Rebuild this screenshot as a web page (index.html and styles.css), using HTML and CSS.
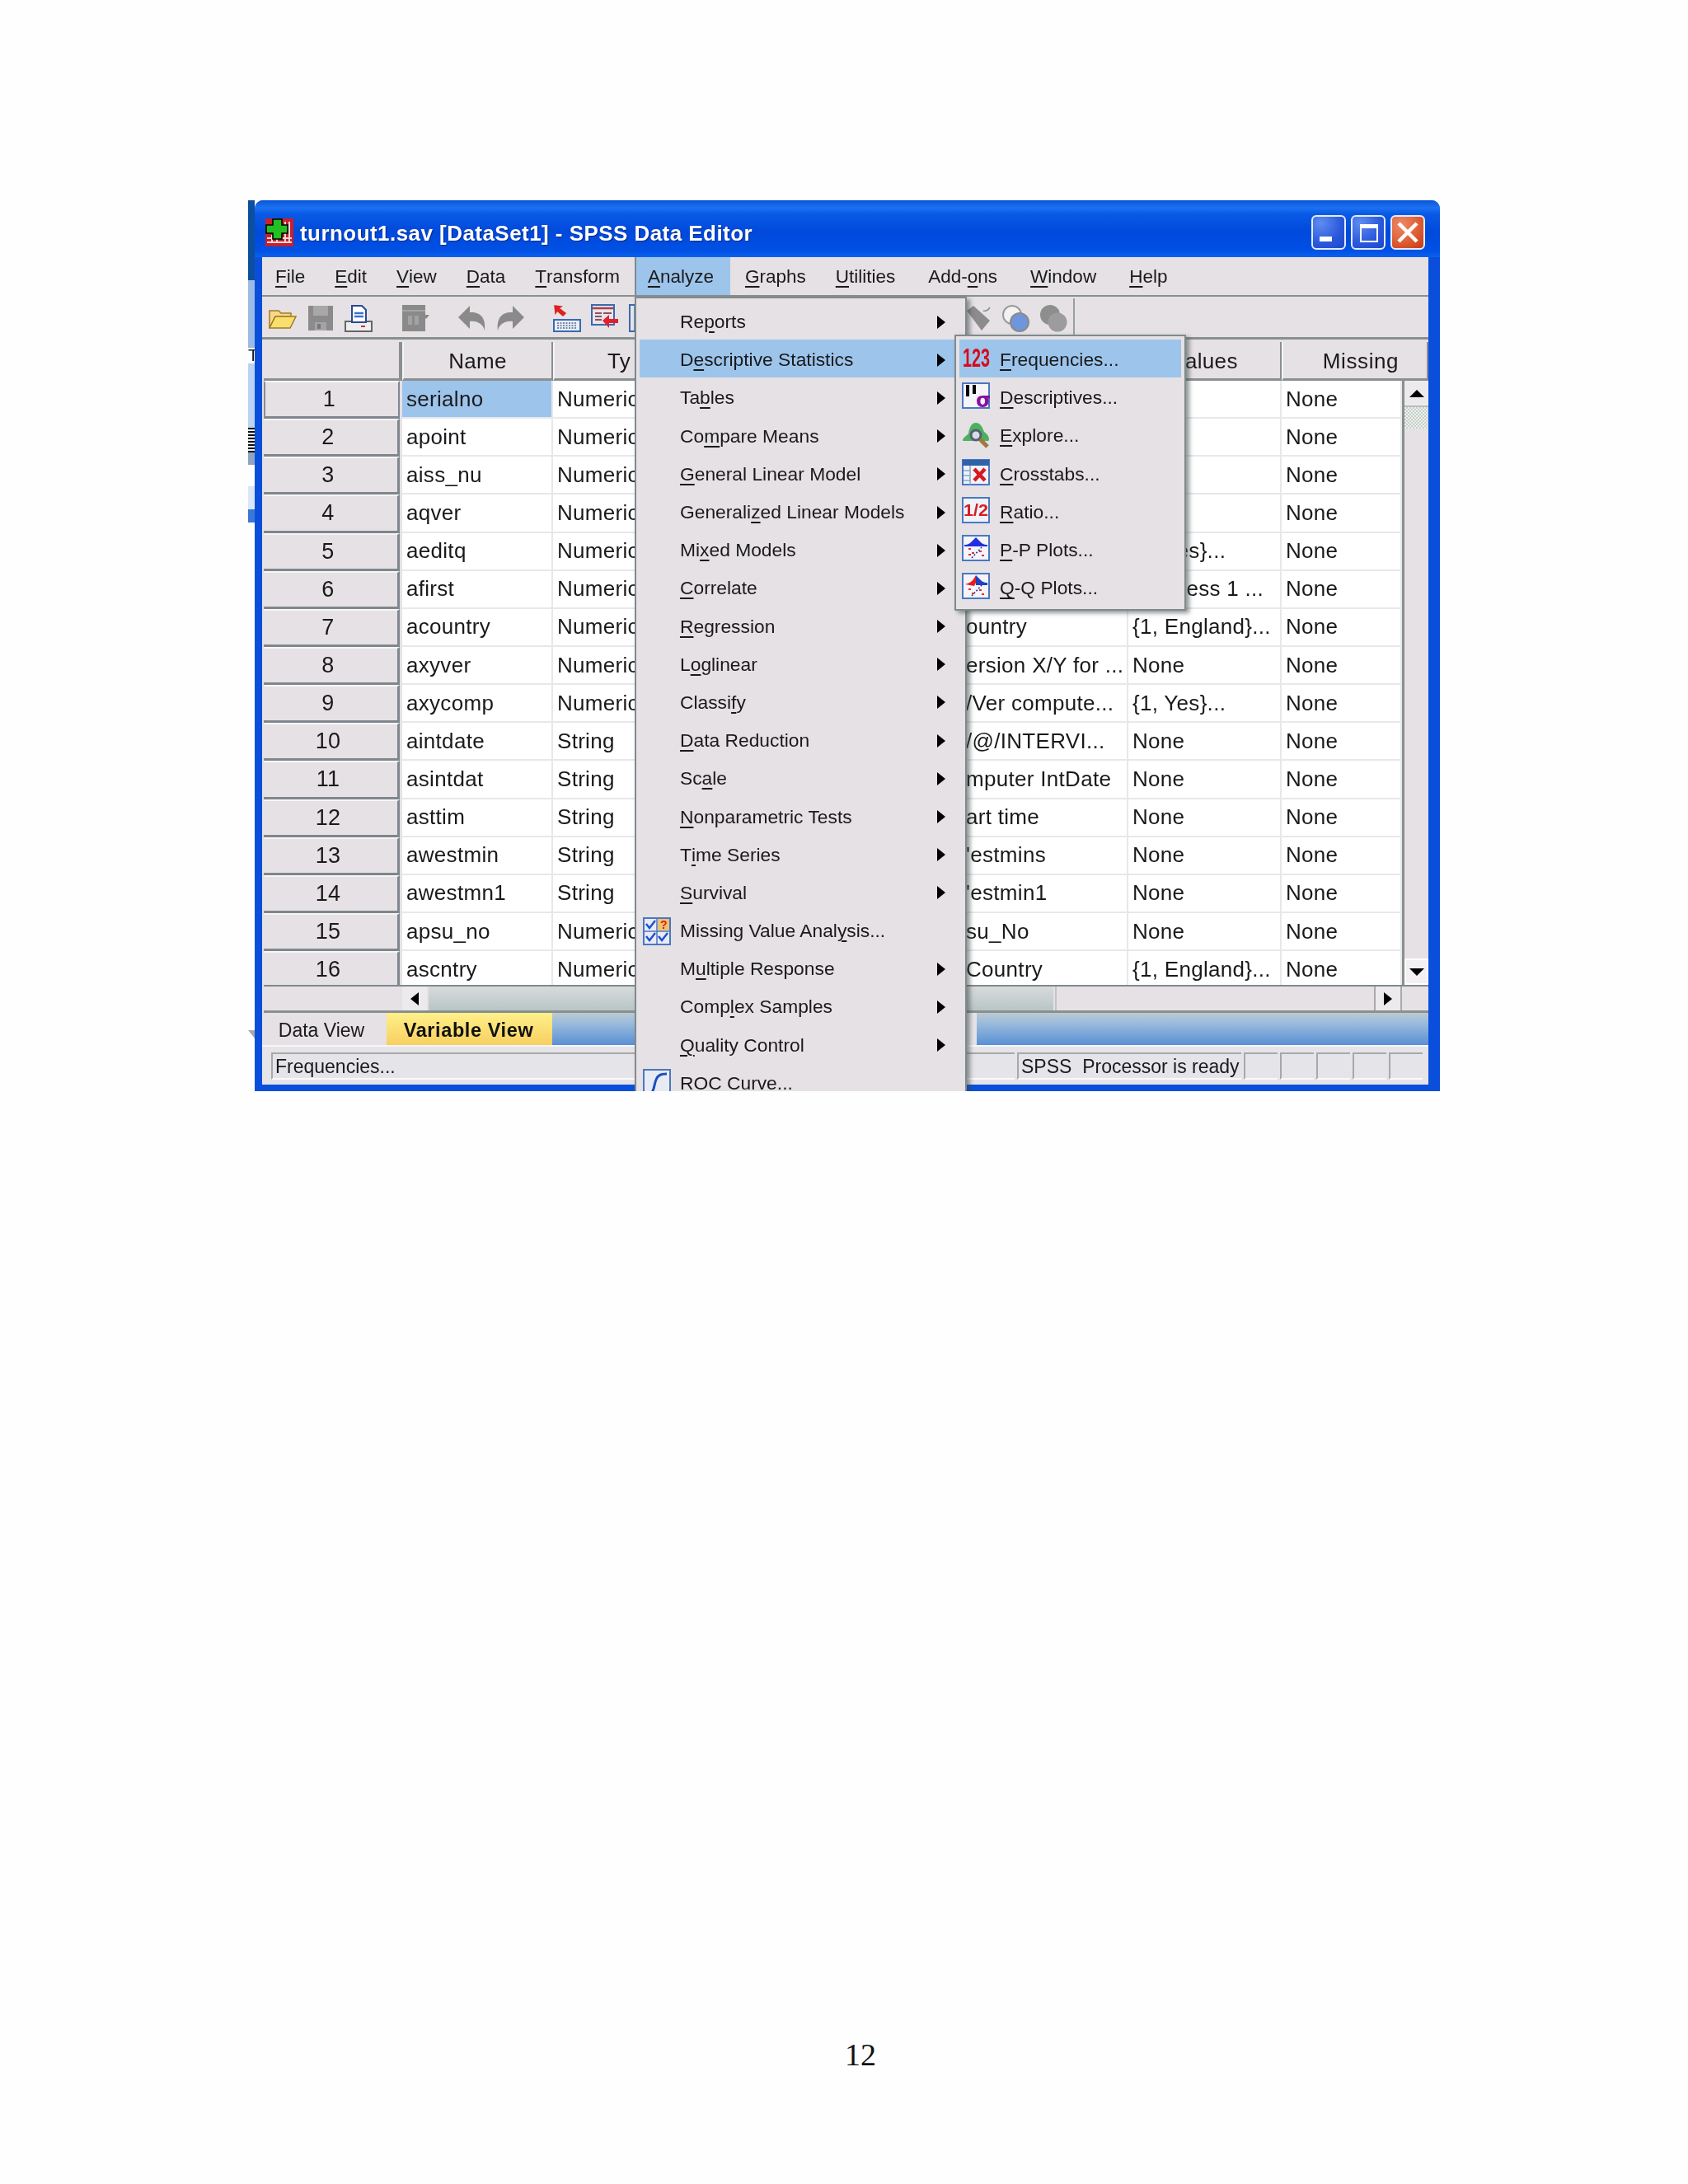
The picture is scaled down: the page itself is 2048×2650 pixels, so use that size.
FILE: index.html
```html
<!DOCTYPE html>
<html lang="en">
<head>
    <meta charset="UTF-8">
    <meta name="viewport" content="width=device-width, initial-scale=1.0">
    <title>SPSS Data Editor</title>
    <link rel="stylesheet" href="styles.css">
</head>
<body>

<div class="shot">

    <!-- sliver of the desktop left of the window -->
    <div class="desktop">
        <div class="d-navy"></div>
        <div class="d-sky"></div>
        <div class="d-t">T</div>
        <div class="d-pale"></div>
        <div class="d-bars"></div>
        <div class="d-grey"></div>
        <div class="d-white"></div>
        <div class="d-pale2"></div>
        <div class="d-blue"></div>
        <div class="d-gap"></div>
        <div class="d-mark"></div>
    </div>

    <div class="window">
        <div class="titlebar">
            <svg class="app-icon" viewBox="0 0 34 34">
                <rect width="34" height="34" fill="#c8202c"/>
                <path d="M2 24h30M2 29h30M24 4v26M29 4v26M14 20v10M8 20v10" stroke="#f2d8d8" stroke-width="2"/>
                <path d="M9 1h11v7h7v10h-7v7H9v-7H1V8h8z" fill="#22c020" stroke="#000" stroke-width="1.6"/>
            </svg>
            <div class="title">turnout1.sav [DataSet1] - SPSS Data Editor</div>
            <div class="win-btn btn-min"><span class="min-bar"></span></div>
            <div class="win-btn btn-max"><span class="max-box"></span></div>
            <div class="win-btn btn-close">
                <svg viewBox="0 0 42 42" width="42" height="42"><path d="M10 10l22 22M32 10L10 32" stroke="#fff" stroke-width="4.5"/></svg>
            </div>
        </div>

        <div class="menubar">
            <div class="menu-item"><u>F</u>ile</div>
            <div class="menu-item"><u>E</u>dit</div>
            <div class="menu-item"><u>V</u>iew</div>
            <div class="menu-item"><u>D</u>ata</div>
            <div class="menu-item"><u>T</u>ransform</div>
            <div class="menu-item active"><u>A</u>nalyze</div>
            <div class="menu-item"><u>G</u>raphs</div>
            <div class="menu-item"><u>U</u>tilities</div>
            <div class="menu-item">Add-<u>o</u>ns</div>
            <div class="menu-item"><u>W</u>indow</div>
            <div class="menu-item"><u>H</u>elp</div>
        </div>

        <div class="toolbar">
            <svg class="tool first" viewBox="0 0 34 34"><path d="M1 29V8h11l3 3h12v4H8z" fill="#f7d98a" stroke="#a87820" stroke-width="1.5"/><path d="M1 29l7-14h25l-7 14z" fill="#f8e070" stroke="#a87820" stroke-width="1.5"/></svg>
            <svg class="tool gap-s" viewBox="0 0 34 34"><path d="M2 2h30v30H2z" fill="#8b8b8b"/><rect x="8" y="2" width="18" height="12" fill="#a8a8a8"/><rect x="10" y="22" width="14" height="10" fill="#a4a4a4"/><rect x="13" y="24" width="4" height="6" fill="#777"/></svg>
            <svg class="tool gap-s" viewBox="0 0 34 34"><rect x="1" y="21" width="32" height="12" fill="#eee" stroke="#666" stroke-width="2"/><path d="M9 2h12l5 5v15H9z" fill="#fff" stroke="#2a4a90" stroke-width="2"/><path d="M12 11h11M12 15h11" stroke="#3a70d0" stroke-width="2.5"/><path d="M20 27h5" stroke="#d03030" stroke-width="2"/></svg>
            <svg class="tool gap-m" viewBox="0 0 34 34"><rect x="1" y="1" width="28" height="32" fill="#8a8a8a"/><path d="M1 8h28" stroke="#a4a4a4" stroke-width="2"/><path d="M8 14h5v11H8zM16 14h5v11h-5z" fill="#a2a2a2"/><path d="M26 13h8l-4 5z" fill="#8a8a8a"/></svg>
            <svg class="tool gap-m" viewBox="0 0 34 34"><path d="M14 2v8c11-1 20 5 18 22-2-8-9-12-18-11v9L0 16z" fill="#8a8a8a"/></svg>
            <svg class="tool gap-s" viewBox="0 0 34 34"><path d="M20 2v8C9 9 0 15 2 32c2-8 9-12 18-11v9l14-14z" fill="#8a8a8a"/></svg>
            <svg class="tool gap-m" viewBox="0 0 34 34"><path d="M2 2l8 1-3 2 8 6-3 3-7-6-2 3z" fill="#e02020" stroke="#e02020" stroke-width="1.5"/><rect x="1" y="19" width="32" height="14" fill="#e8eef8" stroke="#3a6ab0" stroke-width="2"/><path d="M5 23h24M5 26h24M5 29h24" stroke="#5a6a88" stroke-width="1.5" stroke-dasharray="2 1.5"/></svg>
            <svg class="tool gap-s" viewBox="0 0 34 34"><rect x="1" y="1" width="27" height="24" fill="#e8e4e8" stroke="#3a6ab0" stroke-width="2"/><path d="M2 5h25" stroke="#b04040" stroke-width="2.5"/><path d="M5 11h8M5 15h8M5 19h8M15 11h10" stroke="#905060" stroke-width="2"/><path d="M14 20l8-7v5h11v5H22v6z" fill="#e02030"/></svg>
            <svg class="tool gap-s" viewBox="0 0 34 34"><rect x="1" y="1" width="30" height="32" fill="#e8e4e8" stroke="#3a6ab0" stroke-width="2"/><path d="M7 2v30" stroke="#3a6ab0" stroke-width="1.5"/></svg>
            <div class="tool-spacer"></div>
            <svg class="tool" viewBox="0 0 34 34"><path d="M4 8l8-6 20 18-10 12z" fill="#8c8c8c"/><path d="M24 8c3 1 6-1 8-4" stroke="#8c8c8c" stroke-width="1.5" fill="none"/></svg>
            <svg class="tool gap-s" viewBox="0 0 34 34"><circle cx="13" cy="13" r="11" fill="#f2f2f2" stroke="#9a9a9a" stroke-width="2"/><circle cx="22" cy="22" r="11" fill="#6f96dc" stroke="#8a8a8a" stroke-width="2"/></svg>
            <svg class="tool gap-s" viewBox="0 0 34 34"><circle cx="13" cy="13" r="12" fill="#8e8e8e"/><circle cx="22" cy="22" r="11.5" fill="#9c9c9c"/></svg>
            <div class="tool-sep"></div>
        </div>

        <div class="sheet">
            <div class="head-row">
                <div class="head corner"></div>
                <div class="head">Name</div>
                <div class="head head-type">Ty</div>
                <div class="head"></div>
                <div class="head"></div>
                <div class="head">Values</div>
                <div class="head head-missing">Missing</div>
            </div>

            <div class="body-wrap">
                <div class="rows">
                    <div class="row"><div class="num first-num">1</div><div class="cell selected">serialno</div><div class="cell">Numeric</div><div class="cell"></div><div class="cell label"></div><div class="cell">None</div><div class="cell">None</div></div>
                    <div class="row"><div class="num">2</div><div class="cell">apoint</div><div class="cell">Numeric</div><div class="cell"></div><div class="cell label"></div><div class="cell">None</div><div class="cell">None</div></div>
                    <div class="row"><div class="num">3</div><div class="cell">aiss_nu</div><div class="cell">Numeric</div><div class="cell"></div><div class="cell label"></div><div class="cell">None</div><div class="cell">None</div></div>
                    <div class="row"><div class="num">4</div><div class="cell">aqver</div><div class="cell">Numeric</div><div class="cell"></div><div class="cell label"></div><div class="cell">None</div><div class="cell">None</div></div>
                    <div class="row"><div class="num">5</div><div class="cell">aeditq</div><div class="cell">Numeric</div><div class="cell"></div><div class="cell label"></div><div class="cell">{1, Yes}...</div><div class="cell">None</div></div>
                    <div class="row"><div class="num">6</div><div class="cell">afirst</div><div class="cell">Numeric</div><div class="cell"></div><div class="cell label"></div><div class="cell">{1, Press 1 ...</div><div class="cell">None</div></div>
                    <div class="row"><div class="num">7</div><div class="cell">acountry</div><div class="cell">Numeric</div><div class="cell"></div><div class="cell label">ountry</div><div class="cell">{1, England}...</div><div class="cell">None</div></div>
                    <div class="row"><div class="num">8</div><div class="cell">axyver</div><div class="cell">Numeric</div><div class="cell"></div><div class="cell label">ersion X/Y for ...</div><div class="cell">None</div><div class="cell">None</div></div>
                    <div class="row"><div class="num">9</div><div class="cell">axycomp</div><div class="cell">Numeric</div><div class="cell"></div><div class="cell label">/Ver compute...</div><div class="cell">{1, Yes}...</div><div class="cell">None</div></div>
                    <div class="row"><div class="num">10</div><div class="cell">aintdate</div><div class="cell">String</div><div class="cell"></div><div class="cell label">/@/INTERVI...</div><div class="cell">None</div><div class="cell">None</div></div>
                    <div class="row"><div class="num">11</div><div class="cell">asintdat</div><div class="cell">String</div><div class="cell"></div><div class="cell label">mputer IntDate</div><div class="cell">None</div><div class="cell">None</div></div>
                    <div class="row"><div class="num">12</div><div class="cell">asttim</div><div class="cell">String</div><div class="cell"></div><div class="cell label">art time</div><div class="cell">None</div><div class="cell">None</div></div>
                    <div class="row"><div class="num">13</div><div class="cell">awestmin</div><div class="cell">String</div><div class="cell"></div><div class="cell label">'estmins</div><div class="cell">None</div><div class="cell">None</div></div>
                    <div class="row"><div class="num">14</div><div class="cell">awestmn1</div><div class="cell">String</div><div class="cell"></div><div class="cell label">'estmin1</div><div class="cell">None</div><div class="cell">None</div></div>
                    <div class="row"><div class="num">15</div><div class="cell">apsu_no</div><div class="cell">Numeric</div><div class="cell"></div><div class="cell label">su_No</div><div class="cell">None</div><div class="cell">None</div></div>
                    <div class="row"><div class="num">16</div><div class="cell">ascntry</div><div class="cell">Numeric</div><div class="cell"></div><div class="cell label">Country</div><div class="cell">{1, England}...</div><div class="cell">None</div></div>
                </div>
                <div class="vscroll">
                    <div class="sb-btn"><span class="tri tri-up"></span></div>
                    <div class="sb-hatch"></div>
                    <div class="sb-track"></div>
                    <div class="sb-btn sb-btn-down"><span class="tri tri-down"></span></div>
                </div>
            </div>

            <div class="hscroll">
                <div class="hs-corner"></div>
                <div class="hs-btn"><span class="tri tri-left"></span></div>
                <div class="hs-thumb"></div>
                <div class="hs-track"></div>
                <div class="hs-btn hs-btn-right"><span class="tri tri-right"></span></div>
                <div class="hs-end"></div>
            </div>
        </div>

        <div class="tabs">
            <div class="tab">Data View</div>
            <div class="tab tab-on">Variable View</div>
            <div class="tab-fill"></div>
            <div class="tab-gap"></div>
            <div class="tab-fill tab-fill-right"></div>
        </div>

        <div class="status">
            <div class="st-box st-main">Frequencies...</div>
            <div class="st-box st-ready">SPSS&nbsp; Processor is ready</div>
            <div class="st-box st-small"></div>
            <div class="st-box st-small"></div>
            <div class="st-box st-small"></div>
            <div class="st-box st-small"></div>
            <div class="st-box st-small"></div>
        </div>
    </div>

    <!-- Analyze dropdown, runs off the bottom of the capture -->
    <div class="dropdown">
        <div class="dd-item"><span class="dd-icon"></span>Re<u>p</u>orts<span class="tri tri-right dd-arrow"></span></div>
        <div class="dd-item on"><span class="dd-icon"></span>D<u>e</u>scriptive Statistics<span class="tri tri-right dd-arrow"></span></div>
        <div class="dd-item"><span class="dd-icon"></span>Ta<u>b</u>les<span class="tri tri-right dd-arrow"></span></div>
        <div class="dd-item"><span class="dd-icon"></span>Co<u>m</u>pare Means<span class="tri tri-right dd-arrow"></span></div>
        <div class="dd-item"><span class="dd-icon"></span><u>G</u>eneral Linear Model<span class="tri tri-right dd-arrow"></span></div>
        <div class="dd-item"><span class="dd-icon"></span>Generali<u>z</u>ed Linear Models<span class="tri tri-right dd-arrow"></span></div>
        <div class="dd-item"><span class="dd-icon"></span>Mi<u>x</u>ed Models<span class="tri tri-right dd-arrow"></span></div>
        <div class="dd-item"><span class="dd-icon"></span><u>C</u>orrelate<span class="tri tri-right dd-arrow"></span></div>
        <div class="dd-item"><span class="dd-icon"></span><u>R</u>egression<span class="tri tri-right dd-arrow"></span></div>
        <div class="dd-item"><span class="dd-icon"></span>L<u>o</u>glinear<span class="tri tri-right dd-arrow"></span></div>
        <div class="dd-item"><span class="dd-icon"></span>Classi<u>f</u>y<span class="tri tri-right dd-arrow"></span></div>
        <div class="dd-item"><span class="dd-icon"></span><u>D</u>ata Reduction<span class="tri tri-right dd-arrow"></span></div>
        <div class="dd-item"><span class="dd-icon"></span>Sc<u>a</u>le<span class="tri tri-right dd-arrow"></span></div>
        <div class="dd-item"><span class="dd-icon"></span><u>N</u>onparametric Tests<span class="tri tri-right dd-arrow"></span></div>
        <div class="dd-item"><span class="dd-icon"></span>T<u>i</u>me Series<span class="tri tri-right dd-arrow"></span></div>
        <div class="dd-item"><span class="dd-icon"></span><u>S</u>urvival<span class="tri tri-right dd-arrow"></span></div>
        <div class="dd-item">
            <svg class="dd-icon" viewBox="0 0 34 34">
                <rect x="1" y="1" width="32" height="32" fill="#e8eaf4" stroke="#4a78c0" stroke-width="2"/>
                <rect x="18" y="2" width="14" height="14" fill="#f0c070"/>
                <path d="M1 17h32M17 1v32" stroke="#4a78c0" stroke-width="1.5"/>
                <path d="M4 8l4 5 7-9M4 23l4 5 7-9M19 23l4 5 7-9" stroke="#1a50d0" stroke-width="2.4" fill="none"/>
                <text x="21" y="14" class="q-mark">?</text>
            </svg>
            Missing Value Anal<u>y</u>sis...
        </div>
        <div class="dd-item"><span class="dd-icon"></span>M<u>u</u>ltiple Response<span class="tri tri-right dd-arrow"></span></div>
        <div class="dd-item"><span class="dd-icon"></span>Comp<u>l</u>ex Samples<span class="tri tri-right dd-arrow"></span></div>
        <div class="dd-item"><span class="dd-icon"></span><u>Q</u>uality Control<span class="tri tri-right dd-arrow"></span></div>
        <div class="dd-item">
            <svg class="dd-icon" viewBox="0 0 34 34">
                <rect x="1" y="1" width="32" height="32" fill="#e8eaf4" stroke="#4a78c0" stroke-width="2"/>
                <path d="M7 30c7 0 6-10 9-17 2-5 5-7 13-7" stroke="#1a50c0" stroke-width="3" fill="none"/>
            </svg>
            ROC Curve...
        </div>
    </div>

    <div class="submenu">
        <div class="dd-item on">
            <svg class="dd-icon" viewBox="0 0 34 34"><text x="1" y="27" class="ico-123" textLength="33" lengthAdjust="spacingAndGlyphs">123</text></svg>
            <span><u>F</u>requencies...</span>
        </div>
        <div class="dd-item">
            <svg class="dd-icon" viewBox="0 0 34 34">
                <rect x="1" y="1" width="32" height="30" fill="#f4f4fa" stroke="#4a78c0" stroke-width="2"/>
                <path d="M5 3h4v14H5zM13 3h4v11h-4z" fill="#000"/>
                <text x="17" y="30" class="ico-sigma">σ</text>
            </svg>
            <span><u>D</u>escriptives...</span>
        </div>
        <div class="dd-item">
            <svg class="dd-icon" viewBox="0 0 34 34">
                <path d="M1 24c1-4 5-5 7-8 1-6 3-13 9-13 6 0 8 6 10 11 3 2 6 5 6 9 0 3-3 2-6 2H4c-2 0-3 0-3-1z" fill="#4cb060"/>
                <circle cx="17" cy="18" r="6" fill="#d8dcea" stroke="#556070" stroke-width="3"/>
                <path d="M22 23l9 9" stroke="#a07840" stroke-width="5"/>
            </svg>
            <span><u>E</u>xplore...</span>
        </div>
        <div class="dd-item">
            <svg class="dd-icon" viewBox="0 0 34 34">
                <rect x="1" y="1" width="32" height="30" fill="#f0f2fa" stroke="#4a78c0" stroke-width="2"/>
                <rect x="1" y="1" width="32" height="7" fill="#2f62a8"/>
                <path d="M2 14h9M2 20h9M2 26h9M10 8v23" stroke="#88a8c8" stroke-width="1.5"/>
                <path d="M15 12l13 14M28 12L15 26" stroke="#d81820" stroke-width="4.5"/>
            </svg>
            <span><u>C</u>rosstabs...</span>
        </div>
        <div class="dd-item">
            <svg class="dd-icon" viewBox="0 0 34 34">
                <rect x="1" y="1" width="32" height="30" fill="#f0f2fa" stroke="#4a78c0" stroke-width="2"/>
                <text x="2" y="23" class="ico-ratio" textLength="30" lengthAdjust="spacingAndGlyphs">1/2</text>
            </svg>
            <span><u>R</u>atio...</span>
        </div>
        <div class="dd-item">
            <svg class="dd-icon" viewBox="0 0 34 34">
                <rect x="1" y="1" width="32" height="30" fill="#f4f4fa" stroke="#4a78c0" stroke-width="2"/>
                <path d="M3 12c5 0 7-2 9-4l5-5 5 5c2 2 4 4 9 4v2H3z" fill="#2030e0"/>
                <path d="M12 28L24 15" stroke="#2030a0" stroke-width="1.5" stroke-dasharray="2 2"/>
                <path d="M8 17h3M12 22h3M8 24h3M21 20h3M24 25h3" stroke="#e03030" stroke-width="2"/>
            </svg>
            <span><u>P</u>-P Plots...</span>
        </div>
        <div class="dd-item">
            <svg class="dd-icon" viewBox="0 0 34 34">
                <rect x="1" y="1" width="32" height="30" fill="#f4f4fa" stroke="#4a78c0" stroke-width="2"/>
                <path d="M17 3l5 5c2 2 4 4 9 4v3H17z" fill="#2040c0"/>
                <path d="M17 3l-3 5c-2 3-6 5-10 6l11 2 2-4z" fill="#e02020"/>
                <path d="M12 28L24 15" stroke="#2030a0" stroke-width="1.5" stroke-dasharray="2 2"/>
                <path d="M8 20h3M12 25h3M21 21h3M24 26h3" stroke="#e03030" stroke-width="2"/>
            </svg>
            <span><u>Q</u>-Q Plots...</span>
        </div>
    </div>
</div>

<div class="page-num">12</div>

</body>
</html>
```

FILE: styles.css
```css
body {
    margin: 0;
    background: #fefefe;
    font-family: "Liberation Sans", Arial, sans-serif;
    color: #1a1a1a;
}
u {
    text-decoration-thickness: 2px;
    text-underline-offset: 4px;
}

/* the captured picture */
.shot {
    position: relative;
    display: flex;
    width: 1446px;
    height: 1081px;
    margin: 243px 0 0 301px;
    overflow: hidden;
    filter: blur(0.5px);
}

/* desktop sliver */
.desktop {
    width: 8px;
    flex: none;
    display: flex;
    flex-direction: column;
}
.d-navy { height: 97px; background: #0d4f9f; }
.d-sky { height: 82px; background: #9cbbe4; }
.d-t {
    height: 19px;
    background: #fff;
    font-size: 20px;
    line-height: 19px;
    overflow: hidden;
}
.d-pale { height: 78px; background: #bcd4f2; }
.d-bars {
    height: 30px;
    background: repeating-linear-gradient(#111 0 2px, #eee 2px 4px);
}
.d-grey { height: 15px; background: #8fa4c0; }
.d-white { height: 26px; background: #fff; }
.d-pale2 { height: 28px; background: #dbe6f6; }
.d-blue { height: 16px; background: #3a78d8; }
.d-gap { height: 616px; }
.d-mark {
    height: 10px;
    background: #a8a8a8;
    clip-path: polygon(0 0, 100% 0, 100% 100%);
}

/* window frame */
.window {
    flex: 1;
    display: flex;
    flex-direction: column;
    padding: 0 14px 8px 9px;
    background: #0a4fdc;
    border-radius: 10px 10px 0 0;
}
.titlebar {
    display: flex;
    align-items: center;
    height: 69px;
    margin: 0 -14px 0 -9px;
    padding: 8px 18px 0 13px;
    box-sizing: border-box;
    background: linear-gradient(#0a55d8 0, #1c72f2 9px, #0a5ae6 16px, #0049dc 55%, #0050e4 88%, #0a62ee 100%);
    border-radius: 10px 10px 0 0;
}
.app-icon {
    width: 34px;
    height: 34px;
    flex: none;
    margin-right: 8px;
}
.title {
    flex: 1;
    padding-top: 4px;
    color: #fff;
    font-size: 26px;
    font-weight: 700;
    letter-spacing: 0.45px;
    text-shadow: 1px 1px 1px #0a2a80;
}
.win-btn {
    width: 42px;
    height: 42px;
    flex: none;
    margin-left: 6px;
    box-sizing: border-box;
    border: 2px solid #e4ecfa;
    border-radius: 6px;
    background: radial-gradient(circle at 25% 20%, #5f8cf0, #2a58dc 60%, #1c48c8);
    position: relative;
}
.btn-close {
    background: radial-gradient(circle at 30% 25%, #ee8a66, #dd5a30 60%, #c03a16);
}
.btn-close svg {
    position: absolute;
    left: -2px;
    top: -2px;
}
.min-bar {
    position: absolute;
    left: 8px;
    bottom: 8px;
    width: 15px;
    height: 6px;
    background: #fff;
}
.max-box {
    position: absolute;
    left: 9px;
    top: 9px;
    width: 22px;
    height: 22px;
    box-sizing: border-box;
    border: 2px solid #fff;
    border-top-width: 5px;
}

/* menu bar */
.menubar {
    display: flex;
    height: 48px;
    padding-top: 2px;
    background: #e5e1e4;
    border-bottom: 2px solid #8a8f90;
    font-size: 22.5px;
    box-sizing: border-box;
}
.menu-item {
    display: flex;
    align-items: center;
    padding: 0 18px;
}
.menu-item:nth-last-child(-n+3) {
    padding-left: 22px;
}
.menubar > :first-child {
    padding-left: 16px;
}
.active {
    margin-top: -2px;
    padding: 2px 20px 0 14px;
    background: #9dc5ec;
    border-left: 2px solid #7f8a8c;
}

/* toolbar */
.toolbar {
    display: flex;
    align-items: center;
    height: 52px;
    padding: 2px 0 0 8px;
    background: #e5e1e4;
    border-bottom: 3px solid #8a8f90;
    box-sizing: border-box;
}
.tool {
    width: 34px;
    height: 34px;
    flex: none;
}
.gap-s { margin-left: 12px; }
.gap-m { margin-left: 35px; }
.tool-spacer {
    width: 372px;
    flex: none;
}
.tool-sep {
    align-self: stretch;
    width: 2px;
    margin-left: 7px;
    background: #9a9ea0;
}

/* data sheet */
.sheet {
    padding-left: 2px;
    background: #e5e1e4;
    font-size: 26px;
    letter-spacing: 0.3px;
}
.head-row,
.row {
    display: grid;
    grid-template-columns: 168px 183px 180px 321px 197px 186px 146px;
}
.head-row {
    height: 50px;
    padding-top: 3px;
    grid-template-columns: 168px 183px 180px 321px 197px 186px 178px;
    box-sizing: border-box;
}
.head {
    display: flex;
    align-items: center;
    justify-content: center;
    box-sizing: border-box;
    padding-top: 3px;
    border-left: 2px solid #f4f4f4;
    border-right: 2px solid #8a8f90;
    border-bottom: 3px solid #8a8f90;
    overflow: hidden;
    white-space: nowrap;
}
.corner {
    border-left: none;
    border-right-width: 4px;
}
.head-type {
    justify-content: flex-start;
    padding-left: 64px;
}
.head-missing {
    padding-left: 14px;
    letter-spacing: 0.6px;
}
.body-wrap {
    display: flex;
    height: 733px;
}
.rows {
    width: 1381px;
    flex: none;
    overflow: hidden;
}
.row {
    height: 46.15px;
}
.num {
    display: flex;
    align-items: center;
    justify-content: center;
    box-sizing: border-box;
    margin-right: 3px;
    padding-right: 6px;
    background: #e5e1e4;
    border-top: 2px solid #f6f6f6;
    border-bottom: 3px solid #80868e;
    border-right: 3px solid #80868e;
    font-size: 27px;
}
.first-num {
    border-left: 2px solid #8a8f90;
    border-right-width: 2px;
}
.cell {
    display: flex;
    align-items: center;
    box-sizing: border-box;
    padding-left: 5px;
    background: #fff;
    border-right: 2px solid #e6e8ea;
    border-bottom: 2px solid #e6e8ea;
    white-space: nowrap;
    overflow: hidden;
}
.label {
    padding-left: 0;
}
.selected {
    background: #9dc5ec;
}
.tri {
    display: inline-block;
    width: 0;
    height: 0;
    border-style: solid;
    border-color: transparent;
}
.tri-up { border-width: 0 9px 9px; border-bottom-color: #000; }
.tri-down { border-width: 9px 9px 0; border-top-color: #000; }
.tri-left { border-width: 8px 10px 8px 0; border-right-color: #000; }
.tri-right { border-width: 8px 0 8px 10px; border-left-color: #000; }

.vscroll {
    flex: 1;
    display: flex;
    flex-direction: column;
    border-left: 3px solid #8a8f90;
    background: #e5e1e4;
}
.sb-btn {
    height: 32px;
    display: flex;
    align-items: center;
    justify-content: center;
    box-sizing: border-box;
    background: #eceaec;
    border-bottom: 2px solid #bbb;
}
.sb-btn-down {
    background: #f2f0f2;
    border: 2px solid #fff;
}
.sb-hatch {
    height: 26px;
    background: repeating-conic-gradient(#c4d0ca 0 25%, #eef0ee 0 50%) 0 0 / 4px 4px;
}
.sb-track {
    flex: 1;
}
.hscroll {
    display: flex;
    height: 29px;
    border-top: 2px solid #7d8a8a;
    border-bottom: 3px solid #8a8f90;
}
.hs-corner {
    width: 168px;
    flex: none;
}
.hs-btn {
    width: 30px;
    flex: none;
    display: flex;
    align-items: center;
    justify-content: center;
    background: #eceaec;
}
.hs-btn-right {
    border-left: 2px solid #aaa;
    border-right: 2px solid #aaa;
}
.hs-thumb {
    width: 758px;
    flex: none;
    margin-left: 2px;
    background: linear-gradient(#d8dada, #b8c6c6);
}
.hs-track {
    flex: 1;
    margin-left: 2px;
    border-left: 2px solid #c4c4c4;
}
.hs-end {
    width: 32px;
    flex: none;
}

/* view tabs */
.tabs {
    display: flex;
    height: 39px;
    background: #e5e1e4;
    font-size: 23px;
}
.tab {
    display: flex;
    align-items: center;
    justify-content: center;
    width: 150px;
    flex: none;
    padding: 3px 6px 0 0;
    box-sizing: border-box;
}
.tab-on {
    width: 201px;
    margin-left: 1px;
    padding-right: 2px;
    font-weight: 700;
    font-size: 23.5px;
    letter-spacing: 0.6px;
    color: #111;
    background: linear-gradient(#fff08a, #f7cf60);
}
.tab-fill {
    width: 503px;
    flex: none;
    background: linear-gradient(#bccad0, #9cbcdc 30%, #5a90d4);
}
.tab-gap {
    width: 12px;
    flex: none;
    background: #e5e4e8;
}
.tab-fill-right {
    flex: 1;
    width: auto;
}

/* status bar */
.status {
    flex: 1;
    display: flex;
    align-items: center;
    gap: 3px;
    padding: 7px 1px 6px 11px;
    background: #e5e4e8;
    border-top: 2px solid #f6f6f8;
    box-sizing: border-box;
    font-size: 23px;
}
.st-box {
    height: 100%;
    display: flex;
    align-items: center;
    box-sizing: border-box;
    padding-top: 2px;
    border-top: 2px solid #a8a8a8;
    border-left: 2px solid #a8a8a8;
    border-bottom: 2px solid #fafafa;
    overflow: hidden;
    white-space: nowrap;
}
.st-main {
    width: 902px;
    padding-left: 3px;
}
.st-ready {
    width: 272px;
    padding-left: 3px;
}
.st-small {
    width: 41px;
    flex: none;
}

/* dropdown menus */
.dropdown,
.submenu {
    position: absolute;
    box-sizing: border-box;
    background: #e5e1e4;
    border: 2px solid #7f8a8c;
    padding: 4px 4px 0;
    font-size: 22.8px;
    box-shadow: 4px 3px 5px rgba(60, 70, 70, 0.55);
}
.dropdown {
    left: 469px;
    top: 117px;
    width: 403px;
    height: 1100px;
    z-index: 5;
}
.submenu {
    left: 857px;
    top: 163px;
    width: 281px;
    height: 335px;
    z-index: 6;
}
.dd-item {
    display: flex;
    align-items: center;
    height: 46.2px;
    padding-top: 3px;
    box-sizing: border-box;
    white-space: nowrap;
}
.dd-item.on {
    background: #9dc5ec;
}
.dd-icon {
    width: 34px;
    height: 34px;
    flex: none;
    margin: 0 11px 0 4px;
}
.submenu .dd-icon {
    margin: -3px 12px 0 3px;
}
.dd-arrow {
    margin-left: auto;
    margin-right: 20px;
}
.q-mark {
    font: 700 14px "Liberation Sans", sans-serif;
    fill: #d82010;
}
.ico-123 {
    font: 700 31px "Liberation Sans", sans-serif;
    fill: #d40c1c;
}
.ico-sigma {
    font: 700 24px "DejaVu Sans", sans-serif;
    fill: #8a10a0;
}
.ico-ratio {
    font: 700 21px "Liberation Sans", sans-serif;
    fill: #d81c20;
}

.page-num {
    margin-top: 1146px;
    padding-left: 40px;
    text-align: center;
    font-family: "Liberation Serif", "Times New Roman", serif;
    font-size: 38px;
    line-height: 46px;
    color: #111;
}
```
